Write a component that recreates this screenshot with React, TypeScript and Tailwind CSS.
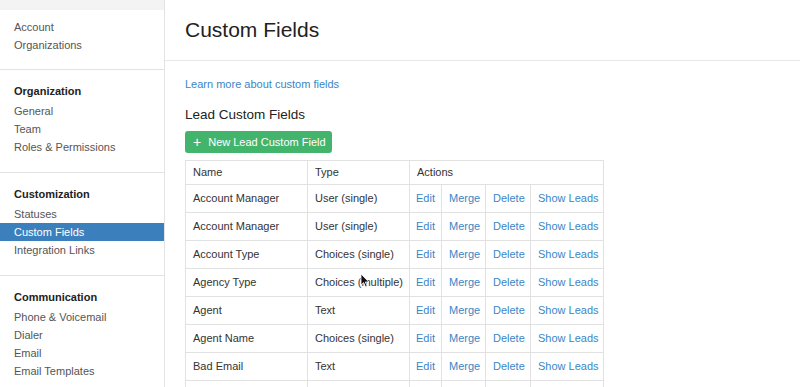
import React from 'react';

type Row = { name: string; type: string };

const rows: Row[] = [
  { name: 'Account Manager', type: 'User (single)' },
  { name: 'Account Manager', type: 'User (single)' },
  { name: 'Account Type', type: 'Choices (single)' },
  { name: 'Agency Type', type: 'Choices (multiple)' },
  { name: 'Agent', type: 'Text' },
  { name: 'Agent Name', type: 'Choices (single)' },
  { name: 'Bad Email', type: 'Text' },
];

const sections = [
  { title: '', items: ['Account', 'Organizations'] },
  { title: 'Organization', items: ['General', 'Team', 'Roles & Permissions'] },
  { title: 'Customization', items: ['Statuses', 'Custom Fields', 'Integration Links'] },
  { title: 'Communication', items: ['Phone & Voicemail', 'Dialer', 'Email', 'Email Templates'] },
];

function Sidebar() {
  return (
    <div className="w-[165px] shrink-0 border-r border-[#e3e3e3] bg-white">
      <div className="h-[10px] bg-[#f3f3f3]" />
      {sections.map((s, i) => (
        <div
          key={i}
          className={i === 0 ? 'pt-[8px] pb-[15px]' : 'pt-[12px] pb-[16px] border-t border-[#e3e3e3]'}
        >
          {s.title && (
            <div className="px-[14px] text-[11px] leading-[18px] font-bold text-[#222] mb-[2px]">{s.title}</div>
          )}
          {s.items.map((item) => (
            <div
              key={item}
              className={`px-[14px] text-[11px] leading-[18px] ${
                item === 'Custom Fields' ? 'bg-[#3b80bd] text-white' : 'text-[#555]'
              }`}
            >
              {item}
            </div>
          ))}
        </div>
      ))}
    </div>
  );
}

function Cursor() {
  return (
    <svg className="absolute left-[360px] top-[273px]" width="10" height="15" viewBox="0 0 10 15">
      <path d="M1 1 L1 12 L3.6 9.6 L5.6 14 L7.2 13.3 L5.3 9 L8.8 9 Z" fill="#111" stroke="#fff" strokeWidth="0.8" />
    </svg>
  );
}

const cell = 'border border-[#e1e1e1] px-[7px] whitespace-nowrap overflow-hidden';
const link = `${cell} text-[#3a86c6]`;

export default function App() {
  return (
    <div
      className="relative flex h-[387px] w-[800px] overflow-hidden bg-white"
      style={{ fontFamily: '"Liberation Sans", Arial, sans-serif' }}
    >
      <Sidebar />
      <div className="flex-1 pt-[16px]">
        <h1 className="pl-[20px] text-[21px] leading-[28px] text-[#222]">Custom Fields</h1>
        <div className="mt-[16px] border-t border-[#e8e8e8]" />
        <div className="pl-[20px]">
          <a className="mt-[14px] block text-[11px] leading-[18px] text-[#3a86c6]">Learn more about custom fields</a>
          <h2 className="mt-[13px] text-[13.5px] leading-[18px] text-[#222]">Lead Custom Fields</h2>
          <button className="mt-[7px] flex h-[22px] w-[147px] items-center gap-[7px] whitespace-nowrap rounded-[3px] bg-[#43b46c] pl-[8px] text-[11px] text-white">
            <span className="text-[14px] leading-none">+</span>
            <span>New Lead Custom Field</span>
          </button>
          <table className="mt-[7px] w-[418px] table-fixed border-collapse text-[11px] text-[#333]">
            <colgroup>
              <col className="w-[122px]" />
              <col className="w-[102px]" />
              <col className="w-[32px]" />
              <col className="w-[44px]" />
              <col className="w-[45px]" />
              <col className="w-[73px]" />
            </colgroup>
            <thead>
              <tr className="h-[24px]">
                <th className="border border-[#e1e1e1] px-[7px] text-left font-normal">Name</th>
                <th className="border border-[#e1e1e1] px-[7px] text-left font-normal">Type</th>
                <th colSpan={4} className="border border-[#e1e1e1] px-[7px] text-left font-normal">Actions</th>
              </tr>
            </thead>
            <tbody>
              {rows.map((r, i) => (
                <tr key={i} className="h-[28px]">
                  <td className={cell}>{r.name}</td>
                  <td className={cell}>{r.type}</td>
                  <td className={`${link} !px-[6px]`}>Edit</td>
                  <td className={link}>Merge</td>
                  <td className={link}>Delete</td>
                  <td className={link}>Show Leads</td>
                </tr>
              ))}
              <tr className="h-[28px]">
                <td className={cell} />
                <td className={cell} />
                <td className={cell} />
                <td className={cell} />
                <td className={cell} />
                <td className={cell} />
              </tr>
            </tbody>
          </table>
        </div>
      </div>
      <Cursor />
    </div>
  );
}
